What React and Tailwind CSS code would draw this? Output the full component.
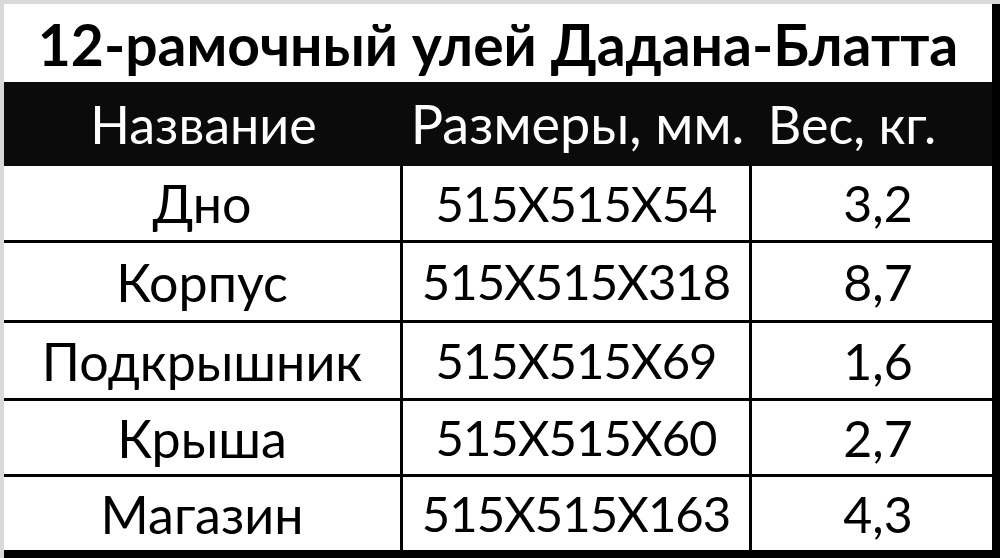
import React from "react";

const rows = [
  { name: "Дно", size: "515X515X54", w: "3,2", h: "h-[77px]" },
  { name: "Корпус", size: "515X515X318", w: "8,7", h: "h-[80px]" },
  { name: "Подкрышник", size: "515X515X69", w: "1,6", h: "h-[78px]" },
  { name: "Крыша", size: "515X515X60", w: "2,7", h: "h-[76px]" },
  { name: "Магазин", size: "515X515X163", w: "4,3", h: "flex-1" },
];

export default function App() {
  return (
    <div
      className="w-[1000px] h-[558px] bg-[#d9d9d9] pt-[4px] pl-[4px] flex overflow-hidden"
      style={{ fontFamily: "Lato, 'Noto Sans', sans-serif" }}
    >
      <div className="flex-1 flex flex-col bg-white border-r-[8px] border-b-[8px] border-black text-black">
        <div className="h-[78px] flex items-center justify-center font-bold text-[57px] leading-none pt-[2px]">
          12-рамочный улей Дадана-Блатта
        </div>
        <div className="h-[84px] bg-[#0b0b0b] text-white flex text-[52px] leading-none items-center">
          <div className="w-[399px] flex justify-center">Название</div>
          <div className="w-[349px] flex justify-center text-[54px]">Размеры, мм.</div>
          <div className="flex-1 flex justify-center pr-[40px]">Вес, кг.</div>
        </div>
        {rows.map((r, i) => (
          <div
            key={r.name}
            className={`flex text-[52px] leading-none ${r.h} ${i < rows.length - 1 ? "border-b-[3px] border-black" : ""}`}
          >
            <div className="w-[399px] border-r-[3px] border-black flex items-center justify-center">{r.name}</div>
            <div className="w-[349px] border-r-[3px] border-black flex items-center justify-center text-[49px] tracking-[-1px]">{r.size}</div>
            <div className="flex-1 flex items-center justify-center pl-[12px] text-[50px]">{r.w}</div>
          </div>
        ))}
      </div>
    </div>
  );
}
